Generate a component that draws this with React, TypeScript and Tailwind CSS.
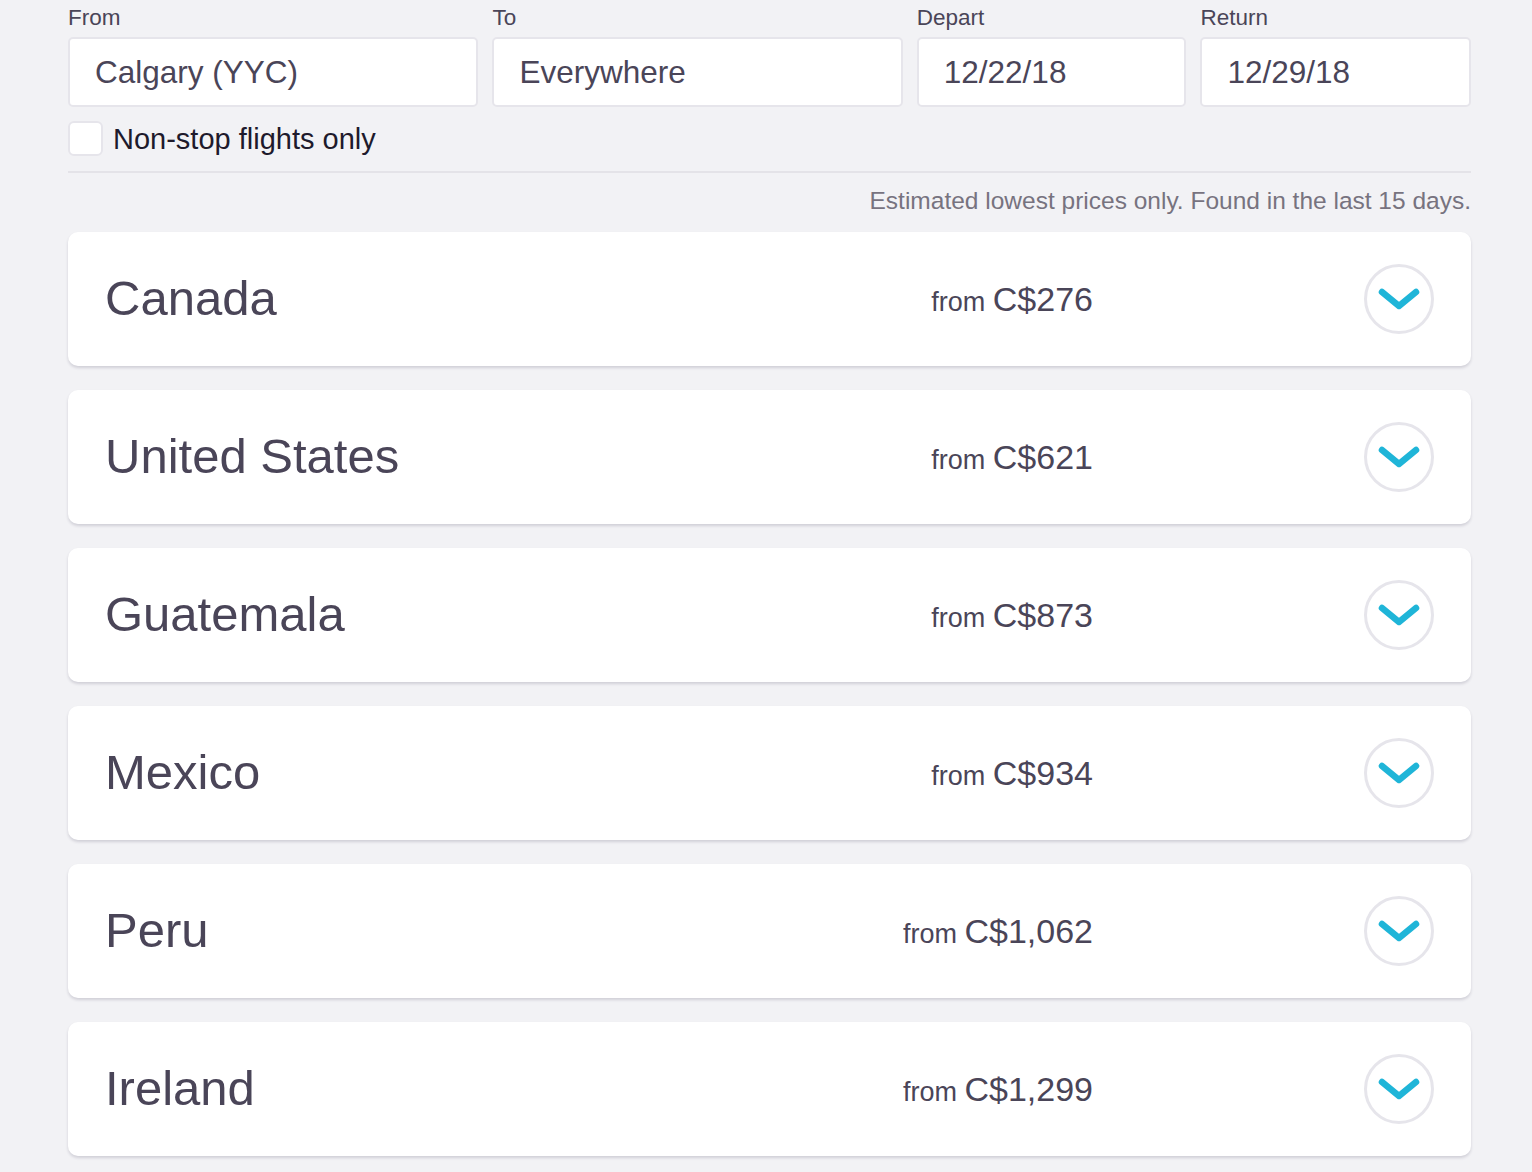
const results = [
  { country: 'Canada', price: 'C$276' },
  { country: 'United States', price: 'C$621' },
  { country: 'Guatemala', price: 'C$873' },
  { country: 'Mexico', price: 'C$934' },
  { country: 'Peru', price: 'C$1,062' },
  { country: 'Ireland', price: 'C$1,299' },
]

function Field({ label, value, width }: { label: string; value: string; width: string }) {
  return (
    <div className={width}>
      <label className="block text-[22.5px] leading-[30px] text-[#4a4558] mb-[4px]">{label}</label>
      <div className="h-[70px] bg-white border-2 border-[#e6e5eb] rounded-[5px] flex items-center pl-[25px] pt-[1px] text-[31.5px] text-[#4a4558]">
        {value}
      </div>
    </div>
  )
}

function Chevron() {
  return (
    <svg width="44" height="24" viewBox="0 0 44 24" fill="none">
      <polyline
        points="5,5 22,19 39,5"
        stroke="#1fb5d8"
        strokeWidth="6.5"
        strokeLinecap="round"
        strokeLinejoin="round"
      />
    </svg>
  )
}

export default function App() {
  return (
    <div className="min-h-screen bg-[#f2f2f5] font-['Liberation_Sans',Arial,sans-serif]">
      <div className="ml-[68px] w-[1403px] pt-[3px]">
        {/* Search form */}
        <div className="flex gap-[14px]">
          <Field label="From" value="Calgary (YYC)" width="w-[411px]" />
          <Field label="To" value="Everywhere" width="w-[411px]" />
          <Field label="Depart" value="12/22/18" width="w-[270px]" />
          <Field label="Return" value="12/29/18" width="w-[271px]" />
        </div>

        <label className="flex items-center gap-[10px] mt-[14px] h-[35px]">
          <span className="w-[35px] h-[35px] bg-white border-2 border-[#e6e5eb] rounded-[6px]" />
          <span className="text-[29px] text-[#1e1a2c] pt-[3px]">Non-stop flights only</span>
        </label>

        <div className="border-t-2 border-[#e4e3e8] mt-[15px]" />

        <p className="text-right text-[24.5px] text-[#77737f] mt-[13px] leading-[30px]">
          Estimated lowest prices only. Found in the last 15 days.
        </p>

        {/* Results */}
        <div className="flex flex-col gap-[24px] mt-[16px] pb-[20px]">
          {results.map((r) => (
            <div
              key={r.country}
              className="h-[134px] bg-white rounded-[10px] shadow-[0_2px_3px_rgba(40,30,60,0.16)] flex items-center pl-[37px] pr-[37px]"
            >
              <div className="flex-1 text-[49px] text-[#4a4558]">{r.country}</div>
              <div className="text-right text-[#4a4558] whitespace-nowrap">
                <span className="text-[27px]">from </span>
                <span className="text-[34px]">{r.price}</span>
              </div>
              <div className="ml-[271px] w-[70px] h-[70px] rounded-full border-[3px] border-[#e6e5eb] flex items-center justify-center">
                <Chevron />
              </div>
            </div>
          ))}
        </div>
      </div>
    </div>
  )
}
